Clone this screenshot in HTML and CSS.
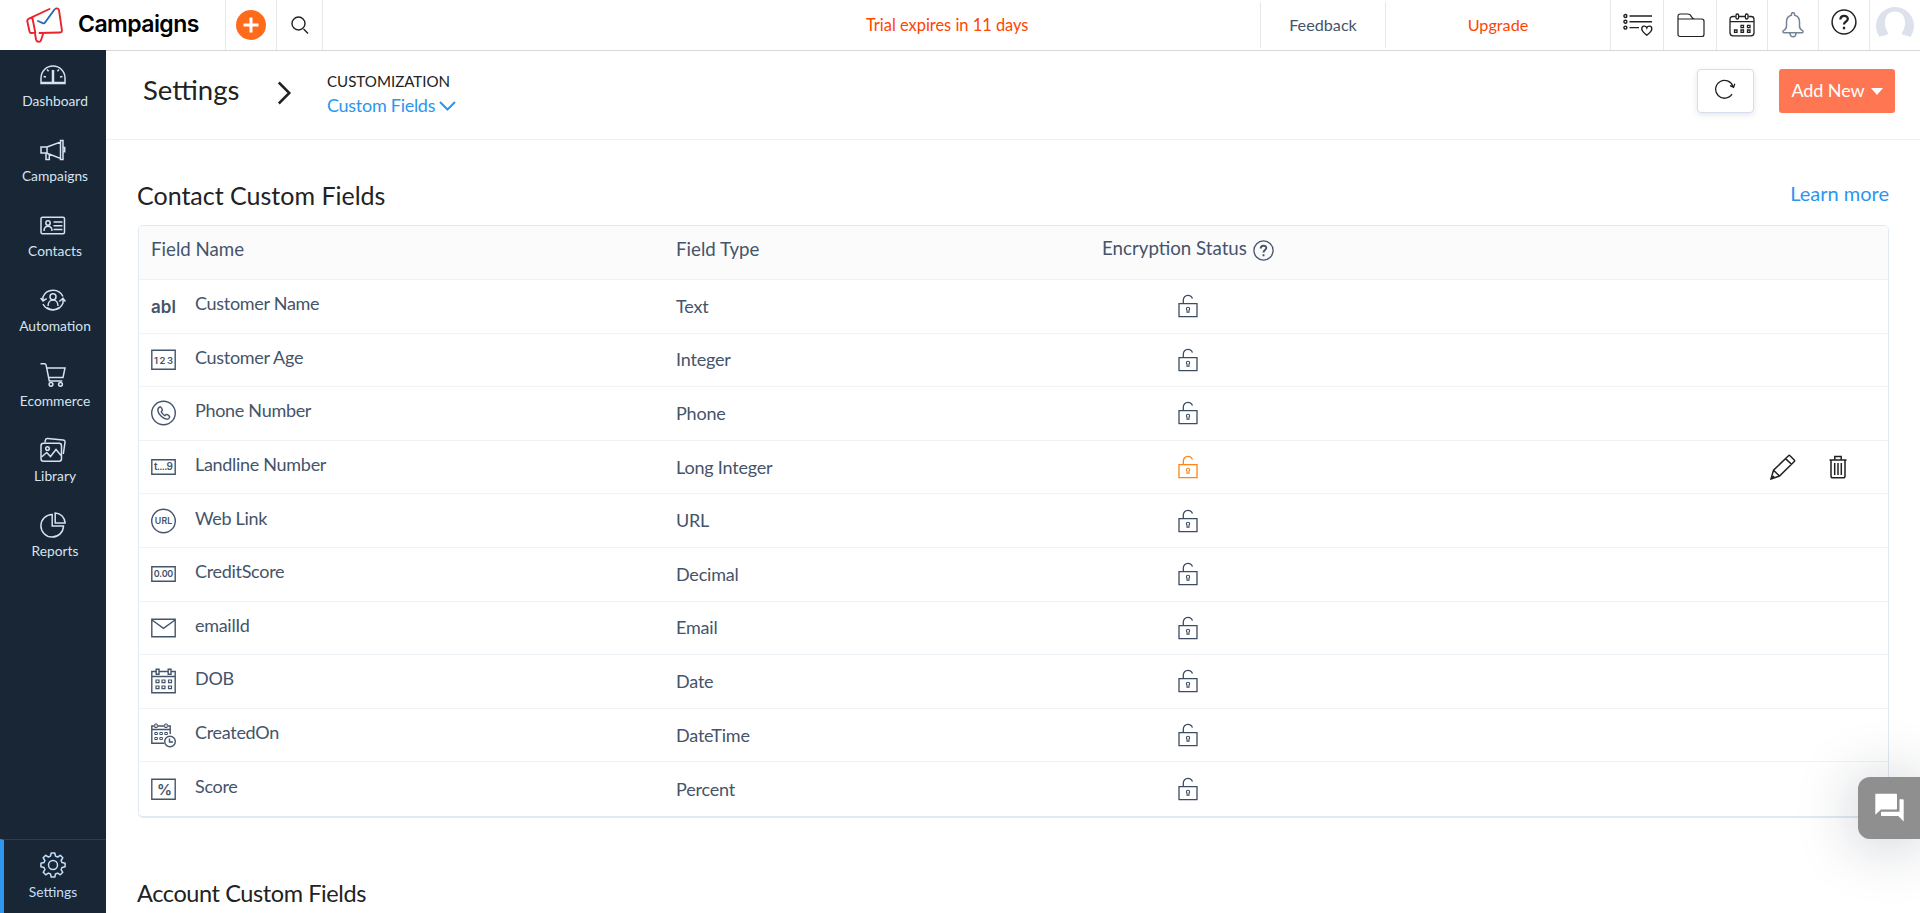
FILE: index.html
```html
<!DOCTYPE html>
<html lang="en">
<head>
<meta charset="utf-8">
<title>Campaigns</title>
<link rel="stylesheet" href="styles.css">
</head>
<body>
<svg class="defs" aria-hidden="true">
  <symbol id="lock" viewBox="0 0 20 24"><path d="M1 9.700h18v13H1zM5.300 9.500V6.200C5.300 3.300 7.300 1.400 9.900 1.400c2.200 0 3.900 1.200 4.500 3.200"/><path stroke-width="1.100" d="M10 13.200a1.600 1.600 0 0 1 1.600 1.600c0 .6-.3 1-.6 1.300v2.200H9V16.100c-.3-.3-.6-.7-.6-1.300A1.600 1.600 0 0 1 10 13.200z"/></symbol>
</svg>
<header class="topbar">
  <div class="brand">
    <svg class="brand-mark" width="38" height="38" viewBox="0 0 38 38" fill="none" stroke="#e9242b" stroke-width="1.900" stroke-linecap="round" stroke-linejoin="round"><path d="M23.500 4 3 13.700c-1.300.6-1.900 1.400-1.700 2.600l2.200 10.200c.3 1.200 1 1.700 2.200 1.500l3-.4M6.300 12.500l3 15M13.500 28l20.300-.5c1.500 0 2.300-.9 2.100-2.400L33 5.200c-.3-1.800-1.700-2.200-3.200-1.500M9 28l1 6.500c.6 2.800 4.300 2.900 5 .7l2-6"/><path stroke="#1f6db8" d="m12 16 4.700 2.200c1 .4 1.700.2 2.300-.7L28.500 4.500"/></svg>
    <span class="brand-name">Campaigns</span>
  </div>
  <div class="tool add"><svg width="30" height="30" viewBox="0 0 30 30"><circle cx="15" cy="15" r="15" fill="#ff6b1a"/><path d="M15 7.500v15M7.500 15h15" stroke="#fff" stroke-width="3"/></svg></div>
  <div class="tool search"><svg width="18" height="19" viewBox="0 0 18 19" fill="none" stroke="#222" stroke-width="1.400"><circle cx="7.500" cy="7.500" r="6.500"/><path d="m12.600 13 4.400 4.600"/></svg></div>
  <div class="trial">Trial expires in 11 days</div>
  <div class="feedback">Feedback</div>
  <div class="upgrade">Upgrade</div>
  <div class="tool t1"><svg width="30" height="24" viewBox="0 0 30 24" fill="none" stroke="#222" stroke-width="1.400"><circle cx="2.400" cy="3" r="1.500"/><circle cx="2.400" cy="8.700" r="1.500"/><circle cx="2.400" cy="14.600" r="1.500"/><path d="M6.500 3H29M6.500 8.700H29M6.500 14.600H16"/><path d="M23.800 22.200c-3-2.400-5-4-5-6.300 0-3.400 4-3.600 5-1 1-2.600 5-2.400 5 1 0 2.300-2 3.900-5 6.300z"/></svg></div>
  <div class="tool t2"><svg width="28" height="25" viewBox="0 0 28 25" fill="none" stroke="#222" stroke-width="1.200"><path d="M1 21.200V3.200C1 1.800 1.800 1 3.200 1h7.300c2.800 0 3.200 1 3.800 2.500.7 1.700 1.500 2.500 3.500 2.500h7c1.500 0 2.200.8 2.200 2.200v13c0 1.500-.8 2.300-2.200 2.300H3.200C1.800 23.500 1 22.700 1 21.200zM1 6h16"/></svg></div>
  <div class="tool t3"><svg width="26" height="24" viewBox="0 0 26 24" fill="none" stroke="#222" stroke-width="1.300"><path d="M6.500 3.500H4C2 3.500 1 4.500 1 6.300v13.500c0 2 1 3 3 3h18c2 0 3-1 3-3V6.300c0-1.800-1-2.800-3-2.800h-2.500M10 3.500h6M1 8.700h24"/><rect x="7" y="1" width="2.600" height="5" rx="1.200"/><rect x="16.400" y="1" width="2.600" height="5" rx="1.200"/><path d="M12 12.300h2.500v2.400H12zM18.500 12.300H21v2.400h-2.500zM5.500 17H8v2.400H5.500zM12 17h2.500v2.400H12zM18.500 17H21v2.400h-2.500z"/></svg></div>
  <div class="tool t4"><svg width="22" height="26" viewBox="0 0 22 26" fill="none" stroke="#758396" stroke-width="1.500"><path d="M2.300 20.800h17.400c1.600 0 1.800-1.800.4-2.500-2-1-2.600-2-2.600-4.300V9.800c0-3.700-2-6-4.900-6.600V2.500C12.600 0 9.400 0 9.400 2.500v.7C6.500 3.800 4.500 6.100 4.500 9.800V14c0 2.300-.6 3.300-2.600 4.300-1.400.7-1.200 2.500.4 2.500zM8 21.500c.3 4.300 5.700 4.300 6 0"/></svg></div>
  <div class="tool t5"><svg width="26" height="26" viewBox="0 0 26 26" fill="none" stroke="#222"><circle cx="13" cy="13" r="11.900" stroke-width="1.500"/><path stroke-width="2.300" d="M9.400 10.600C9.400 5.600 17 6 16.800 10c-.2 2.700-3.800 2.600-3.800 5.600M13 17.800v2.500"/></svg></div>
  <div class="tool avatar"><svg width="38" height="38" viewBox="0 0 38 38"><path d="M3.500 31A19 19 0 1 1 34.500 31c-2-.9-5-1.700-7.500-2.200-1.200-.5-1.100-2.300-.3-3.500C31 19 30 5.500 19 5.500S7 19 11.300 25.300c.8 1.200.9 3-.3 3.500-2.500.5-5.500 1.300-7.500 2.200z" fill="#dce1eb"/></svg></div>
</header>
<div class="shell">
  <nav class="sidebar">
    <a class="nav-item"><svg viewBox="0 0 26 26"><path d="M1 21.500V16a12 12 0 0 1 24 0v5.500zM3.500 14.500l2.500.5M22.500 14.500l-2.500.5M7 7.500l1.600 1.800M19 7.500l-1.600 1.800M1 20.500h24"/><path d="M13 8v12" stroke-width="2.500"/></svg><span>Dashboard</span></a>
    <a class="nav-item"><svg viewBox="0 0 26 26"><path d="M1 10h6v6H1zM7 10l13.500-5v16.500L7 16.300M20.500 3.500H23v19h-2.500zM23 10.500h1.700v4.300H23M6 16.500v6h3.300v-5"/></svg><span>Campaigns</span></a>
    <a class="nav-item"><svg viewBox="0 0 26 26"><rect x="1" y="5.200" width="23.500" height="16.500" rx="1.500"/><circle cx="8" cy="11" r="2.200"/><path d="M4 19c0-6.500 8-6.500 8 0M13.500 10h9M13.500 13.800h9M13.500 17.500h9"/></svg><span>Contacts</span></a>
    <a class="nav-item"><svg viewBox="0 0 26 26"><circle cx="13" cy="9.800" r="3"/><path d="M8 19c0-8 10-8 10 0M23 9.500A11 11 0 0 0 3 9.800v3.500M.6 11l2.400 3 3.700-2.300M3 17a11 11 0 0 0 20-1v-4M19.300 14.500l3.700-3.200 2.400 3.200M7 20.500c4 3 8 3 12 0"/></svg><span>Automation</span></a>
    <a class="nav-item"><svg viewBox="0 0 26 26"><path d="M.5 1.800h4c1 0 1.400.4 1.600 1.400L9.300 19h13M6.500 6H25l-2 9.500H8.600"/><circle cx="11" cy="22.300" r="1.900"/><circle cx="20.500" cy="22.300" r="1.900"/></svg><span>Ecommerce</span></a>
    <a class="nav-item"><svg viewBox="0 0 26 26"><rect x="1" y="6.200" width="20.500" height="18" rx="2.500"/><path d="m5 5.500.3-2.200c.3-1.300 1-2 2.300-1.900l15.500 1.500c1.400.2 2.100 1 1.900 2.400L23.300 17M1.500 20l5.200-4.500 3.800 4 5.500-7 5 6"/><circle cx="7.500" cy="11.500" r="1.800"/></svg><span>Library</span></a>
    <a class="nav-item"><svg viewBox="0 0 26 26"><path d="M12.200 2.500A11.300 11.300 0 1 0 23.500 14H12.200zM15.200 1c5.500.2 9.700 4.400 9.900 9.900h-9.900z"/></svg><span>Reports</span></a>
    <a class="nav-item settings"><svg viewBox="0 0 26 26"><circle cx="13" cy="13" r="4.500"/><path d="M11.200 1h3.600l.7 3.100 2.100.9 2.700-1.700 2.500 2.500-1.700 2.700.9 2.100 3.100.7v3.500l-3.100.7-.9 2.100 1.700 2.700-2.500 2.500-2.700-1.700-2.100.9-.7 3.100h-3.600l-.7-3.100-2.100-.9-2.700 1.700-2.500-2.500 1.700-2.700-.9-2.100-3.100-.7v-3.500l3.100-.7.9-2.100-1.700-2.700 2.500-2.500L8.400 5l2.100-.9z" stroke-linejoin="round"/></svg><span>Settings</span></a>
  </nav>
  <main class="main">
    <div class="page-head">
      <h1>Settings</h1>
      <svg class="chev" width="15" height="24" viewBox="0 0 15 24" fill="none" stroke="#222" stroke-width="2.500"><path d="m1.800 1.500 10.500 10.500L1.800 22.500"/></svg>
      <div class="crumb"><span class="crumb-top">CUSTOMIZATION</span><span class="crumb-link">Custom Fields <svg width="17" height="10" viewBox="0 0 17 10" fill="none" stroke="#2b96ef" stroke-width="2"><path d="m1 1 7.500 7.500L16 1"/></svg></span></div>
      <button class="refresh"><svg width="21" height="20" viewBox="0 0 21 20" fill="none" stroke="#222" stroke-width="1.300"><path d="M18 7.500A8.900 8.900 0 1 0 17 15.200M15 6.600l3.600 1.800 1.200-3.600"/></svg></button>
      <button class="add-new">Add New <i class="caret"></i></button>
    </div>
    <section class="content">
      <div class="section-head"><h2>Contact Custom Fields</h2><a class="learn">Learn more</a></div>
      <div class="table">
        <div class="row head"><div class="name">Field Name</div><div class="type">Field Type</div><div class="enc">Encryption Status <svg width="21" height="21" viewBox="0 0 21 21" fill="none" stroke="#44546a"><circle cx="10.500" cy="10.500" r="9.600" stroke-width="1.300"/><path stroke-width="1.900" d="M7.700 8.500C7.700 4.700 13.500 5 13.300 8c-.2 2-2.800 2-2.800 4.500M10.500 14.300v2"/></svg></div></div>
        <div class="row"><svg class="ficon" viewBox="0 0 25 26"><text class="abl" x="0" y="19.500" textLength="25">abl</text></svg><div class="name">Customer Name</div><div class="type">Text</div><svg class="lock"><use href="#lock"/></svg></div>
        <div class="row"><svg class="ficon" viewBox="0 0 25 26"><path d="M.8 3.300h23.400v19H.8z"/><text class="glyph" x="3" y="16.500" font-size="9.500" textLength="19">123</text></svg><div class="name">Customer Age</div><div class="type">Integer</div><svg class="lock"><use href="#lock"/></svg></div>
        <div class="row"><svg class="ficon" viewBox="0 0 25 26"><circle cx="12.500" cy="13" r="11.800"/><path d="M9 6.800c-3.500 1.500-2.500 6 1.200 9.500 3.500 3.300 7.500 4 8.500.8.300-.8-2.500-3-3.400-2.600-.7.300-.8 1.200-1.500 1-1-.4-3.200-2.700-3.500-3.700-.2-.7 1-.8 1.100-1.500.1-1-1.600-3.700-2.400-3.500z"/></svg><div class="name">Phone Number</div><div class="type">Phone</div><svg class="lock"><use href="#lock"/></svg></div>
        <div class="row"><svg class="ficon" viewBox="0 0 25 26"><path d="M.8 5.800h23.400v14.500H.8z"/><text class="glyph" x="3" y="16" font-size="10" textLength="19">t....9</text></svg><div class="name">Landline Number</div><div class="type">Long Integer</div><svg class="lock active"><use href="#lock"/></svg>
          <div class="actions"><svg width="26" height="26" viewBox="0 0 26 26"><path d="m1 25 2.500-8.800L18.500 1.800c.5-.6 1-.6 1.500 0l4.300 4.200c.5.500.5 1 0 1.500L9.500 22zM3.500 16.200l6 5.800M15.500 4.600l6 5.700M1 25l3-3"/></svg><svg width="18" height="24" viewBox="0 0 18 24"><path d="M.5 5h17M5.800 5V1.500h6.400V5M2 5.500V21c0 1.200.6 1.800 1.800 1.800h10.400c1.200 0 1.800-.6 1.800-1.800V5.500M5.700 8v12M9 8v12M12.300 8v12"/></svg></div></div>
        <div class="row"><svg class="ficon" viewBox="0 0 25 26"><circle cx="12.500" cy="13" r="11.800"/><text class="glyph" x="3.800" y="16" font-size="8.800" textLength="17.500">URL</text></svg><div class="name">Web Link</div><div class="type">URL</div><svg class="lock"><use href="#lock"/></svg></div>
        <div class="row"><svg class="ficon" viewBox="0 0 25 26"><path d="M.8 5.800h23.400v14.500H.8z"/><text class="glyph" x="2.800" y="16.300" font-size="9" textLength="19.500">0.00</text></svg><div class="name">CreditScore</div><div class="type">Decimal</div><svg class="lock"><use href="#lock"/></svg></div>
        <div class="row"><svg class="ficon" viewBox="0 0 25 26"><path d="M.8 4.300h23.400v17.500H.8zM1 5l11.500 8.300L24 5"/></svg><div class="name">emailId</div><div class="type">Email</div><svg class="lock"><use href="#lock"/></svg></div>
        <div class="row"><svg class="ficon" viewBox="0 0 25 26"><path d="M4.500 3.500H.8v21.200h23.400V3.500h-3.700M8.300 3.500h8.400M.8 8.500h23.400M5.200 1.300H8v5H5.200zM17.200 1.300H20v5h-2.800z"/><path stroke-width="1.200" d="M5 12h3v2.700H5zM11 12h3v2.700h-3zM17.500 12h3v2.700h-3zM5 18h3v2.700H5zM11 18h3v2.700h-3zM17.500 18h3v2.700h-3z"/></svg><div class="name">DOB</div><div class="type">Date</div><svg class="lock"><use href="#lock"/></svg></div>
        <div class="row"><svg class="ficon" viewBox="0 0 25 26"><path d="M3.500 4H.8v17.300H13M19.200 12V4h-2.500M6.500 4h7M.8 7.500h18.400"/><path stroke-width="1" d="M3.800 2h2.400v3.500H3.800zM13.800 2h2.400v3.500h-2.400zM3.800 10.500h2.600v2H3.800zM8.800 10.500h2.600v2H8.800zM13.800 10.500h2.600v2h-2.600zM3.800 15.500h2.600v2H3.800zM8.800 15.500h2.600v2H8.800z"/><circle cx="19" cy="19.500" r="5.300"/><path d="M18.500 16.500V20H22"/></svg><div class="name">CreatedOn</div><div class="type">DateTime</div><svg class="lock"><use href="#lock"/></svg></div>
        <div class="row"><svg class="ficon" viewBox="0 0 25 26"><path d="M.8 3.300h23.400v20H.8z"/><text class="glyph" x="6" y="18.800" font-size="15" textLength="13">%</text></svg><div class="name">Score</div><div class="type">Percent</div><svg class="lock"><use href="#lock"/></svg></div>
      </div>
      <h2 class="second">Account Custom Fields</h2>
    </section>
  </main>
</div>
<div class="chat"><svg width="29" height="29" viewBox="0 0 29 29" fill="#fff"><path d="M1 .8h20c.6 0 1 .4 1 1v13.700c0 .6-.4 1-1 1H6L.3 21.800V1.800c0-.6.3-1 .7-1zM24.500 6.300h3.200c.6 0 1 .4 1 1v21.200L23.300 23H7c-.6 0-1-.4-1-1v-3.300h18.500z"/></svg></div>
</body>
</html>
```
FILE: styles.css
```css
* { box-sizing: border-box; }
body { margin: 0; height: 913px; overflow: hidden; background: #fff; font-family: Lato, sans-serif; color: #222; }
.defs { position: absolute; width: 0; height: 0; }
h1, h2 { margin: 0; font-weight: 400; }
svg { display: block; flex: none; }

.topbar { display: flex; height: 51px; border-bottom: 1px solid #d8d8d8; }
.brand { width: 225px; display: flex; padding: 5px 0 0 26px; }
.brand-name { margin: 3px 0 0 14px; font: 600 23px/32px Inter, sans-serif; letter-spacing: -0.55px; color: #000; }
.tool { border-left: 1px solid #e6e6e6; display: flex; align-items: flex-start; justify-content: center; }
.add { width: 51px; padding-top: 10px; }
.search { width: 47px; padding: 16px 0 0 0; border-right: 1px solid #e6e6e6; }
.trial { flex: 1; padding-left: 543px; color: #ff4400; font-size: 16.4px; line-height: 50px; white-space: nowrap; }
.feedback { width: 126px; height: 46px; margin-top: 2px; border-left: 1px solid #e6e6e6; border-right: 1px solid #e6e6e6; text-align: center; font-size: 16.2px; line-height: 46px; color: #44546a; }
.upgrade { width: 224px; text-align: center; color: #ff4400; font-size: 16.2px; line-height: 50px; }
.t1 { width: 53px; padding: 13px 0 0 2px; }
.t2 { width: 53px; padding: 13px 0 0 1px; }
.t3 { width: 51px; padding-top: 13px; }
.t4 { width: 51px; padding-top: 12px; }
.t5 { width: 51px; padding-top: 9px; }
.avatar { width: 51px; padding-top: 6px; }

.shell { display: flex; height: 862px; }
.sidebar { width: 106px; margin-top: -1px; height: 863px; background: #182635; display: flex; flex-direction: column; position: relative; }
.nav-item { height: 75px; padding: 12px 0 0; display: flex; flex-direction: column; align-items: center; color: #d5e3f0; font-size: 13.8px; line-height: 18px; }
.nav-item svg { width: 26px; height: 26px; fill: none; stroke: #d5e3f0; stroke-width: 1.5; }
.nav-item span { margin: 4px 0 0 4px; }
.settings { margin-top: auto; height: 74px; border-left: 4px solid #2f97f0; border-top: 1px solid #2d3b58; padding: 12px 4px 0 0; color: #c4dffa; }
.settings svg { stroke: #c4dffa; }
.settings span { margin: 5px 0 0; }

.main { flex: 1; }
.page-head { height: 89px; border-bottom: 1px solid #f0f1f2; display: flex; padding: 18px 25px 0 37px; }
.page-head h1 { width: 134px; font-size: 27.5px; line-height: 42px; }
.chev { margin-top: 12px; }
.crumb { margin-left: 35px; flex: 1; display: flex; flex-direction: column; }
.crumb-top { font-size: 15.1px; line-height: 25px; }
.crumb-link { display: flex; align-items: center; gap: 4px; color: #2b96ef; font-size: 18px; letter-spacing: -0.28px; line-height: 23px; }
button { font-family: inherit; border: 0; padding: 0; display: flex; align-items: center; justify-content: center; }
.refresh { width: 57px; height: 44px; background: #fff; border: 1px solid #d5dceb; border-radius: 4px; box-shadow: 0 2px 6px rgba(0,0,0,.1); padding-bottom: 4px; }
.add-new { width: 116px; height: 44px; margin-left: 25px; background: #ff7752; border-radius: 3px; color: #fff; font-size: 18px; letter-spacing: -0.1px; gap: 6px; padding-bottom: 3px; }
.caret { border: 6px solid transparent; border-top: 7px solid #fff; border-bottom: 0; margin-top: 3px; }

.content { padding: 36px 31px 0 32px; }
.section-head { display: flex; justify-content: space-between; height: 49px; }
h2 { font-size: 25px; line-height: 38px; margin-left: -1px; }
.learn { font-size: 20px; line-height: 35px; color: #2b96ef; }
.table { border: 1px solid #e1e9f2; border-bottom-width: 2px; border-radius: 5px; height: 593px; display: grid; grid-template-rows: 54px repeat(10, 1fr); overflow: hidden; color: #44546a; font-size: 18px; }
.row { display: grid; grid-template-columns: 44px 481px 373px 276px 1fr; align-items: center; padding-left: 12px; border-bottom: 1px solid #eef3f8; }
.row:last-child { border-bottom: 0; }
.head { background: #fbfbfc; grid-template-columns: 525px 373px 276px 1fr; padding-bottom: 7px; font-size: 18.7px; }
.row .name { line-height: 22px; }
.row:not(.head) .name { margin-top: -6px; letter-spacing: -0.3px; }
.row:not(.head) .type { margin-top: -1px; letter-spacing: -0.2px; }
.enc { display: flex; justify-content: center; gap: 6px; line-height: 22px; width: 300px; margin-left: -11px; white-space: nowrap; }
.enc svg { margin-top: 3px; }
.ficon { width: 25px; height: 26px; fill: none; stroke: #44546a; stroke-width: 1.4; }
.ficon text { fill: #44546a; stroke: none; font-family: Inter, sans-serif; font-weight: 600; }
.abl { font-size: 17px; }
.lock { width: 20px; height: 24px; margin-left: 129px; fill: none; stroke: #3c4c63; stroke-width: 1.3; }
.lock.active { stroke: #ff8412; }
.actions { display: flex; align-items: center; justify-content: flex-end; gap: 33px; padding-right: 41px; }
.actions svg { fill: none; stroke: #222; stroke-width: 1.5; }
.second { margin-top: 56px; font-size: 23.5px; letter-spacing: -0.4px; }

.chat { position: absolute; right: 0; top: 777px; width: 62px; height: 62px; border-radius: 12px 0 0 12px; background: #8f8f8f; box-shadow: 0 4px 60px rgba(20,30,50,.25); padding: 16px 0 0 17px; }
```
